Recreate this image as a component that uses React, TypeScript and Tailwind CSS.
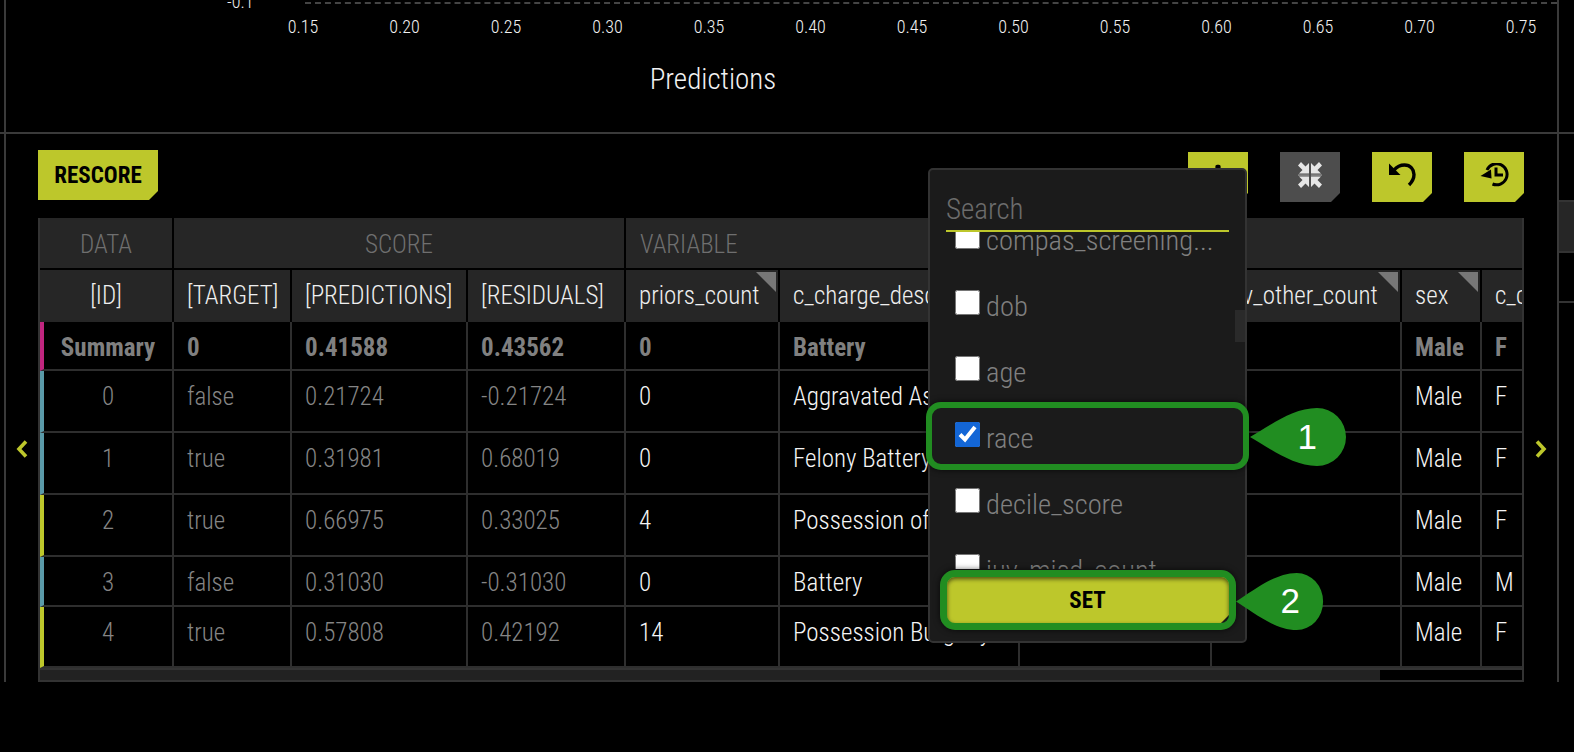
import { FaPlus } from 'react-icons/fa';
import type { ReactNode } from 'react';

const WIDTHS = [134, 118, 176, 158, 154, 240, 192, 190, 80, 90];

const HEADS = [
  { label: '[ID]', center: true },
  { label: '[TARGET]' },
  { label: '[PREDICTIONS]' },
  { label: '[RESIDUALS]' },
  { label: 'priors_count', mark: true },
  { label: 'c_charge_desc', mark: true },
  { label: 'juv_fel_count', mark: true },
  { label: 'juv_other_count', mark: true },
  { label: 'sex', mark: true },
  { label: 'c_charge_degree', mark: true },
];

const ROWS = [
  { h: 'h-[49px]', stripe: 'border-l-[#c0267f]', bold: true, cells: ['Summary', '0', '0.41588', '0.43562', '0', 'Battery', '0', '', 'Male', 'F'] },
  { h: 'h-[62px]', stripe: 'border-l-[#5a9aa8]', cells: ['0', 'false', '0.21724', '-0.21724', '0', 'Aggravated Assault', '0', '', 'Male', 'F'] },
  { h: 'h-[62px]', stripe: 'border-l-[#5a9aa8]', cells: ['1', 'true', '0.31981', '0.68019', '0', 'Felony Battery', '0', '', 'Male', 'F'] },
  { h: 'h-[62px]', stripe: 'border-l-[#bdc72b]', cells: ['2', 'true', '0.66975', '0.33025', '4', 'Possession of Cocaine', '0', '', 'Male', 'F'] },
  { h: 'h-[50px]', stripe: 'border-l-[#5a9aa8]', cells: ['3', 'false', '0.31030', '-0.31030', '0', 'Battery', '0', '', 'Male', 'M'] },
  { h: 'h-[61px]', stripe: 'border-l-[#bdc72b]', cells: ['4', 'true', '0.57808', '0.42192', '14', 'Possession Burglary Tools', '0', '', 'Male', 'F'] },
];

const TICKS = ['0.15', '0.20', '0.25', '0.30', '0.35', '0.40', '0.45', '0.50', '0.55', '0.60', '0.65', '0.70', '0.75'];

const CORNER = '[clip-path:polygon(0_0,100%_0,100%_calc(100%-9px),calc(100%-9px)_100%,0_100%)]';

function ToolButton({ children, gray }: { children: ReactNode; gray?: boolean }) {
  return (
    <button className={`w-[60px] h-[50px] flex items-center justify-center ${CORNER} ${gray ? 'bg-[#4d4d4d] text-[#e6e6e6]' : 'bg-[#bdc72b] text-black'}`}>
      {children}
    </button>
  );
}

function CompressIcon() {
  const arrow = 'M19 18.5 L9 18.5 L12.5 15 L8 10.5 L11 7 L15.5 11.5 L19 8 Z';
  return (
    <svg width="26" height="28" viewBox="7 6 26 28" className="mb-[5px]" fill="currentColor">
      <path d={arrow} />
      <path d={arrow} transform="matrix(-1 0 0 1 40 0)" />
      <path d={arrow} transform="matrix(1 0 0 -1 0 40)" />
      <path d={arrow} transform="matrix(-1 0 0 -1 40 40)" />
      <rect x="8" y="19.6" width="11" height="0.9" fill="#b5b5b5" />
      <rect x="21" y="19.6" width="11" height="0.9" fill="#b5b5b5" />
    </svg>
  );
}

function UndoIcon() {
  return (
    <svg width="28" height="26" viewBox="8 8 28 26" className="mb-[4px]">
      <path d="M9 9.5 L9 21 L20.5 21 Z" fill="currentColor" />
      <path d="M14 16 C17 12.5 21 11 24.5 11 C30.5 11 34 15.5 34 20.5 C34 24.5 32 28 29 31" fill="none" stroke="currentColor" strokeWidth="3.4" />
    </svg>
  );
}

function HistoryIcon() {
  return (
    <svg width="30" height="25" viewBox="100 10 30 25" className="mb-[4px]">
      <path d="M101.5 23 L112 16.5 L112.5 25.5 Z" fill="currentColor" />
      <path d="M108 17 A10.5 10.5 0 1 1 113.5 31" fill="none" stroke="currentColor" strokeWidth="3" />
      <path d="M117 14.5 V22 H124" fill="none" stroke="currentColor" strokeWidth="3" />
    </svg>
  );
}

function Chevron({ left }: { left?: boolean }) {
  return (
    <svg width="12" height="18" viewBox="0 0 12 18" className="text-[#bdc72b]">
      <path d={left ? 'M10 1.5 L3 9 L10 16.5' : 'M2 1.5 L9 9 L2 16.5'} fill="none" stroke="currentColor" strokeWidth="3.6" />
    </svg>
  );
}

function Callout({ n, className, numClass }: { n: string; className: string; numClass: string }) {
  return (
    <div className={`absolute ${className}`}>
      <svg viewBox="0 0 97 60" preserveAspectRatio="none" className="w-full h-full">
        <path d="M0 30 C18 20 42 1 67 1 A29 29 0 0 1 67 59 C42 59 18 40 0 30Z" fill="#218d21" />
      </svg>
      <span className={`absolute inset-y-0 flex items-center text-[35px] text-white [font-family:'Liberation_Sans',sans-serif] [font-stretch:100%] ${numClass}`}>{n}</span>
    </div>
  );
}

function ColumnPopup() {
  const items = [
    { label: 'compas_screening...' },
    { label: 'dob' },
    { label: 'age' },
    { label: 'race', checked: true },
    { label: 'decile_score' },
    { label: 'juv_misd_count' },
  ];
  return (
    <div className="absolute left-[922px] top-[34px] w-[319px] h-[475px] bg-[#1b1b1b] border-2 border-[#333] rounded-[5px] flex flex-col z-10 overflow-hidden">
      <div className="px-[16px] pt-[20px] shrink-0">
        <input
          placeholder="Search"
          className="w-full h-[42px] bg-transparent border-b-2 border-[#bdc72b] text-[29px] font-light outline-none placeholder:text-[#6c6c6c]"
        />
      </div>
      <div className="h-[337px] overflow-hidden relative">
        <div className="-mt-[29px] px-[25px] flex flex-col">
          {items.map((item) => (
            <label key={item.label} className="h-[66px] flex items-center gap-[6px] text-[28.5px] font-light text-[#808080] shrink-0">
              <input type="checkbox" defaultChecked={item.checked} className="w-[25px] h-[25px] shrink-0 accent-[#1366d6]" />
              <span className="whitespace-nowrap mt-[10px]">{item.label}</span>
            </label>
          ))}
        </div>
        <div className="absolute right-0 top-[78px] w-[10px] h-[32px] bg-[#2a2a2a]"></div>
      </div>
      <div className="px-[16px] pt-[5px]">
        <button className={`w-full h-[50px] pt-[4px] bg-[#bdc72b] text-black text-[23px] font-bold ${CORNER}`}>SET</button>
      </div>
    </div>
  );
}

export default function App() {
  return (
    <div className="h-[752px] w-[1574px] bg-black overflow-hidden [font-family:Roboto,sans-serif] [font-stretch:75%]">
      {/* chart stub */}
      <div className="h-[134px] flex border-b-2 border-[#3a3a3a]">
        <div className="w-[6px] border-r-2 border-[#3a3a3a]"></div>
        <div className="flex-1 flex flex-col font-light">
          <div className="h-[8px] flex items-end overflow-hidden">
            <span className="ml-[221px] w-[78px] text-[18px] leading-[20px] -mb-[4px] text-[#eee]">-0.1</span>
            <div className="flex-1 mb-[4px] border-t-2 border-dashed border-[#444]"></div>
          </div>
          <div className="mt-[8px] ml-[272px] mr-[11px] flex justify-between text-[18px] leading-[22px] text-[#f2f2f2]">
            {TICKS.map((t) => (
              <span key={t} className="w-[50px] text-center">{t}</span>
            ))}
          </div>
          <div className="mt-[24px] ml-[407px] w-[600px] text-center text-[29px] leading-[34px] text-[#f2f2f2]">Predictions</div>
        </div>
        <div className="w-[17px] border-l-2 border-[#3a3a3a]"></div>
      </div>

      <div className="h-[548px] flex items-start">
        <div className="w-[6px] h-[548px] border-r-2 border-[#3a3a3a]"></div>
        <div className="flex-1">
          <div className="relative pt-[16px] flex">
            <div className="w-[32px] h-[531px] pt-[290px] flex justify-center"><Chevron left /></div>
            <div className="w-[1486px]">
              <div className="h-[50px] flex justify-between">
                <button className={`w-[120px] h-[50px] pt-[2px] bg-[#bdc72b] text-black text-[23px] font-bold ${CORNER}`}>RESCORE</button>
                <div className="flex gap-[32px] mt-[2px]">
                  <ToolButton><FaPlus size={28} /></ToolButton>
                  <ToolButton gray><CompressIcon /></ToolButton>
                  <ToolButton><UndoIcon /></ToolButton>
                  <ToolButton><HistoryIcon /></ToolButton>
                </div>
              </div>
              <div className="mt-[18px] h-[464px] flex flex-col relative">
                <div className="h-[450px] overflow-hidden border-x-2 border-[#333]">
                  <table className="table-fixed border-separate border-spacing-0 text-[25px] font-light w-[1532px]">
                    <colgroup>
                      {WIDTHS.map((w, i) => (
                        <col key={i} style={{ width: w }} />
                      ))}
                    </colgroup>
                    <thead>
                      <tr className="bg-[#262626] text-[#6f6f6f]">
                        <th className="h-[52px] pt-[4px] font-light border-r-2 border-b-2 border-black">DATA</th>
                        <th colSpan={3} className="pt-[4px] font-light border-r-2 border-b-2 border-black">SCORE</th>
                        <th colSpan={6} className="pt-[4px] font-light text-left pl-[14px] border-b-2 border-black">VARIABLE</th>
                      </tr>
                      <tr className="bg-[#262626] text-[#efefef]">
                        {HEADS.map((h) => (
                          <th key={h.label} className={`h-[52px] relative font-light whitespace-nowrap overflow-hidden border-r-2 border-black ${h.center ? 'text-center' : 'text-left pl-[13px]'}`}>
                            {h.label}
                            {h.mark && <span className="absolute right-[2px] top-[2px] w-[20px] h-[20px] bg-[#777] [clip-path:polygon(0_0,100%_0,100%_100%)]"></span>}
                          </th>
                        ))}
                      </tr>
                    </thead>
                    <tbody>
                      {ROWS.map((row, r) => (
                        <tr key={r} className={row.h}>
                          {row.cells.map((c, i) => {
                            const color = row.bold ? 'text-[#808080] font-bold' : i < 4 ? 'text-[#858585]' : 'text-[#f5f5f5]';
                            return (
                              <td
                                key={i}
                                className={`align-top pt-[12px] leading-[28px] whitespace-nowrap overflow-hidden border-r-2 border-b-2 border-[#2e2e2e] ${color} ${i === 0 ? `text-center border-l-[4px] ${row.stripe}` : 'pl-[13px]'}`}
                              >
                                {c}
                              </td>
                            );
                          })}
                        </tr>
                      ))}
                    </tbody>
                  </table>
                </div>
                <div className="h-[14px] border-2 border-[#333] bg-black">
                  <div className="w-[1340px] h-full bg-[#222]"></div>
                </div>
              </div>
              <ColumnPopup />
              {/* annotations */}
              <div className="absolute left-[920px] top-[268px] w-[323px] h-[68px] border-[6px] border-[#218d21] rounded-[15px] shadow-[0_0_6px_rgba(0,0,0,0.7)] z-20"></div>
              <div className="absolute left-[934px] top-[436px] w-[296px] h-[60px] border-[7px] border-[#218d21] rounded-[15px] shadow-[0_0_6px_rgba(0,0,0,0.7),inset_0_2px_4px_rgba(0,0,0,0.6)] z-20"></div>
              <Callout n="1" numClass="right-[30px]" className="left-[1244px] top-[273px] w-[97px] h-[60px] z-20" />
              <Callout n="2" numClass="right-[24px]" className="left-[1230px] top-[438px] w-[88px] h-[59px] z-20" />
            </div>
            <div className="w-[33px] h-[531px] pt-[290px] flex justify-center"><Chevron /></div>
          </div>
        </div>
        <div className="w-[17px] h-[548px] border-l-2 border-[#3a3a3a] flex flex-col">
          <div className="h-[66px]"></div>
          <div className="h-[53px] bg-[#262626] border-y-2 border-[#333]"></div>
          <div className="h-[50px] border-b-2 border-[#333]"></div>
        </div>
      </div>
    </div>
  );
}
